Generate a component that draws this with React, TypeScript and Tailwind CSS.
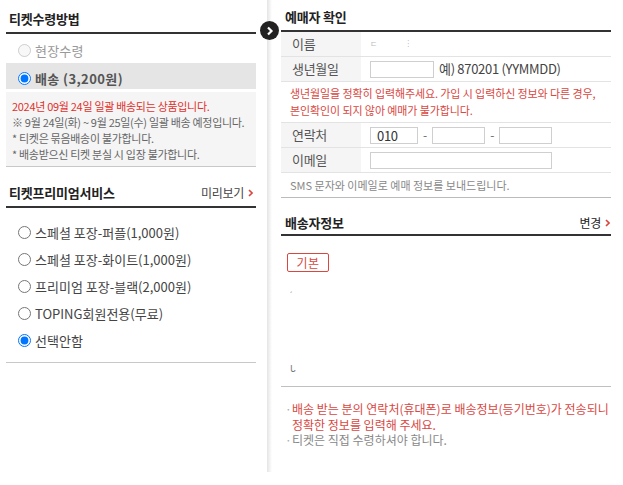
import React from "react";

const RED = "#d9473f";

function Chevron({ color = RED }: { color?: string }) {
  return (
    <svg width="5" height="8" viewBox="0 0 5 8" className="shrink-0">
      <polyline points="1,1 4,4 1,7" fill="none" stroke={color} strokeWidth="1.6" />
    </svg>
  );
}

function Radio({ checked, disabled, name }: { checked?: boolean; disabled?: boolean; name: string }) {
  return (
    <input
      type="radio"
      name={name}
      defaultChecked={checked}
      disabled={disabled}
      className="m-0 h-[13px] w-[13px] shrink-0"
    />
  );
}

const premium = [
  "스페셜 포장-퍼플(1,000원)",
  "스페셜 포장-화이트(1,000원)",
  "프리미엄 포장-블랙(2,000원)",
  "TOPING회원전용(무료)",
  "선택안함",
];

function Box({ w, children }: { w: number; children?: React.ReactNode }) {
  return (
    <div
      className="h-[17px] border border-[#cfcfcf] bg-white pl-[6px] text-[13px] leading-[15px] text-[#333] tracking-[-0.3px]"
      style={{ width: w }}
    >
      {children}
    </div>
  );
}

function Row({ label, children }: { label: string; children?: React.ReactNode }) {
  return (
    <div className="flex h-[25px] border-b border-[#e3e3e3]">
      <div className="flex w-[80px] items-center bg-[#f5f5f5] pl-[11px] text-[13px] tracking-[-0.3px] text-[#555]">
        {label}
      </div>
      <div className="flex flex-1 items-center pl-[9px]">{children}</div>
    </div>
  );
}

export default function App() {
  return (
    <div className="flex h-[485px] w-[623px] bg-white font-['Noto_Sans_CJK_KR','Noto_Sans',sans-serif] text-[#333]">
      {/* left: ticket receipt */}
      <div className="ml-[6px] flex w-[250px] flex-col">
        <div className="h-[34px] border-b-2 border-[#333] pl-[3px] pt-[10px] text-[13px] font-bold leading-[18px] tracking-[-0.2px] text-[#222]">
          티켓수령방법
        </div>
        <div className="flex h-[29px] items-center gap-[4px] pl-[12px] pt-[4px] text-[13px] tracking-[0.2px] text-[#999]">
          <Radio name="recv" disabled />
          현장수령
        </div>
        <div className="flex h-[26px] items-center gap-[4px] bg-[#e5e5e5] pl-[12px] pt-[5px] text-[13px] font-bold tracking-[0.4px] text-[#555]">
          <Radio name="recv" checked />
          배송 (3,200원)
        </div>
        <div className="mt-[3px] whitespace-nowrap border-b border-[#c8c8c8] bg-[#f5f5f5] pb-[4px] pl-[6px] pt-[6px] text-[11px] leading-[16px] tracking-[-0.3px] text-[#666]">
          <p className="text-[#e2302b]">2024년 09월 24일 일괄 배송되는 상품입니다.</p>
          <p>※ 9월 24일(화) ~ 9월 25일(수) 일괄 배송 예정입니다.</p>
          <p>* 티켓은 묶음배송이 불가합니다.</p>
          <p>* 배송받으신 티켓 분실 시 입장 불가합니다.</p>
        </div>
        <div className="flex h-[41px] items-start justify-between border-b-2 border-[#333] pl-[3px] pr-[3px] pt-[17px]">
          <span className="text-[13px] font-bold leading-[18px] tracking-[-0.2px] text-[#222]">티켓프리미엄서비스</span>
          <span className="flex items-center gap-[4px] text-[12px] leading-[18px] tracking-[-0.3px] text-[#444]">
            미리보기
            <Chevron />
          </span>
        </div>
        <div className="border-b border-[#c8c8c8] pb-[8px] pt-[11px]">
          {premium.map((p, i) => (
            <div key={p} className="flex h-[27px] items-center gap-[4px] pl-[12px] text-[13px] tracking-[0px] text-[#444]">
              <Radio name="premium" checked={i === premium.length - 1} />
              {p}
            </div>
          ))}
        </div>
      </div>

      {/* divider */}
      <div className="relative w-[25px]">
        <div className="ml-[11px] h-[472px] w-[5px] bg-gradient-to-r from-[#e4e4e4] to-white" />
        <div className="absolute left-[4px] top-[21px] flex h-[19px] w-[19px] items-center justify-center rounded-full bg-[#222]">
          <svg width="8" height="10" viewBox="0 0 8 10">
            <polyline points="2,1.5 5.5,5 2,8.5" fill="none" stroke="#fff" strokeWidth="2.2" />
          </svg>
        </div>
      </div>

      {/* right: buyer */}
      <div className="flex w-[330px] flex-col">
        <div className="h-[32px] border-b-2 border-[#333] pl-[4px] pt-[8px] text-[13px] font-bold leading-[18px] tracking-[-0.2px] text-[#222]">
          예매자 확인
        </div>
        <Row label="이름">
          <span className="text-[8px] tracking-[14px] text-[#bbb]">ㄷ ⁝</span>
        </Row>
        <Row label="생년월일">
          <Box w={64} />
          <span className="ml-[5px] text-[13px] tracking-[-0.3px] text-[#444]">예) 870201 (YYMMDD)</span>
        </Row>
        <div className="border-b border-[#e3e3e3] pb-[3px] pl-[9px] pt-[3px] text-[11px] leading-[17px] tracking-[-0.1px] text-[#d9473f]">
          <p>생년월일을 정확히 입력해주세요. 가입 시 입력하신 정보와 다른 경우,</p>
          <p>본인확인이 되지 않아 예매가 불가합니다.</p>
        </div>
        <Row label="연락처">
          <Box w={48}>010</Box>
          <span className="mx-[5px] text-[12px] text-[#666]">-</span>
          <Box w={53} />
          <span className="mx-[5px] text-[12px] text-[#666]">-</span>
          <Box w={53} />
        </Row>
        <Row label="이메일">
          <Box w={182} />
        </Row>
        <div className="flex h-[25px] items-center border-b border-[#bbb] pl-[9px] text-[11px] tracking-[0px] text-[#888]">
          SMS 문자와 이메일로 예매 정보를 보내드립니다.
        </div>

        <div className="flex h-[38px] items-start justify-between border-b-2 border-[#333] pl-[4px] pr-[1px] pt-[16px]">
          <span className="text-[13px] font-bold leading-[18px] tracking-[-0.2px] text-[#222]">배송자정보</span>
          <span className="flex items-center gap-[4px] text-[12px] leading-[18px] tracking-[-0.3px] text-[#222]">
            변경
            <Chevron />
          </span>
        </div>
        <div className="h-[151px] border-b border-[#c0c0c0] pl-[6px] pt-[17px]">
          <div className="flex h-[19px] w-[42px] items-center justify-center rounded-[2px] border border-[#d9473f] text-[12px] tracking-[0.5px] text-[#d9473f]">
            기본
          </div>
          <div className="ml-[3px] mt-[12px] text-[8px] leading-[8px] text-[#999]">ˏ</div>
          <div className="ml-[3px] mt-[72px] text-[9px] leading-[9px] text-[#777]">ᒐ</div>
        </div>
        <div className="pl-[4px] pt-[14px] text-[12px] leading-[15.5px] tracking-[0px]">
          <div className="flex text-[#d9473f]">
            <span className="w-[7px] text-[#aaa]">·</span>
            <p>
              배송 받는 분의 연락처(휴대폰)로 배송정보(등기번호)가 전송되니
              <br />
              정확한 정보를 입력해 주세요.
            </p>
          </div>
          <div className="flex text-[#888]">
            <span className="w-[7px] text-[#aaa]">·</span>
            <p>티켓은 직접 수령하셔야 합니다.</p>
          </div>
        </div>
      </div>
    </div>
  );
}
